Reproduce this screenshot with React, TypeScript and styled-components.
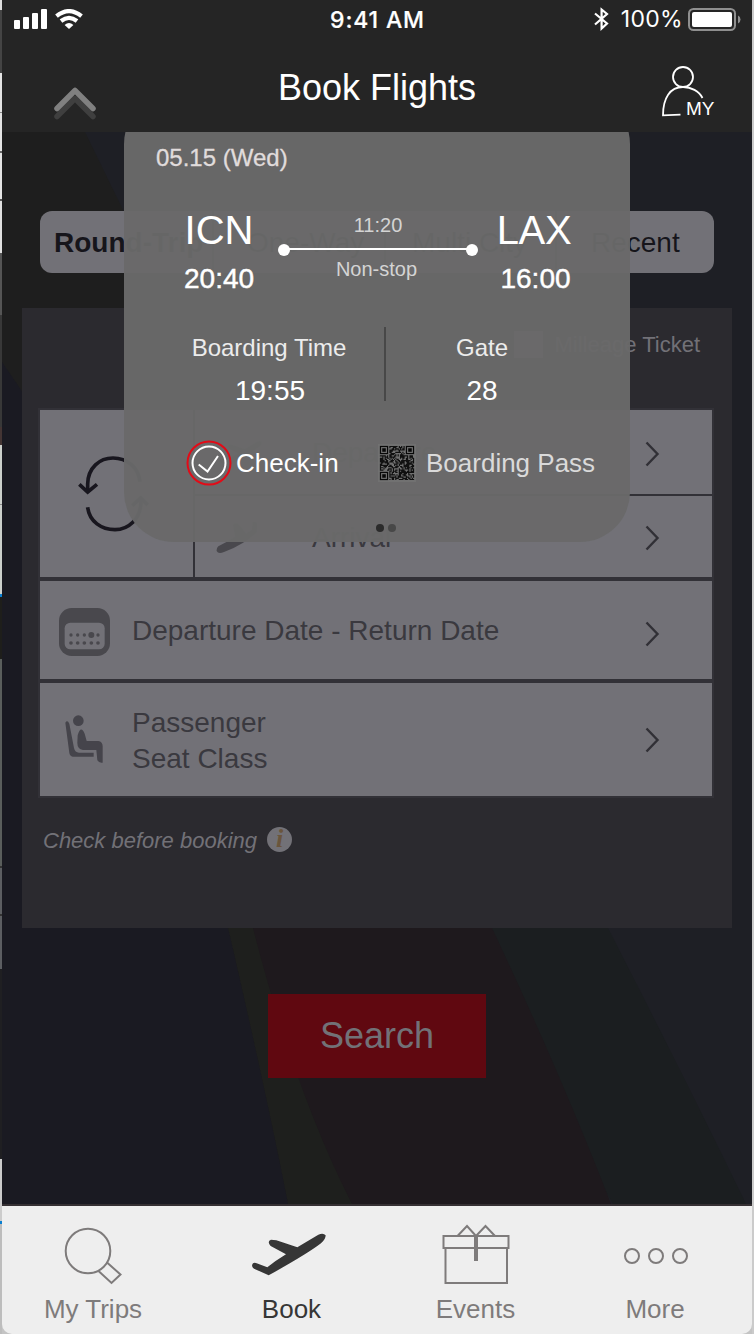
import React from "react";
import styled, { createGlobalStyle } from "styled-components";

const GlobalStyle = createGlobalStyle`
  * { box-sizing: border-box; }
  body { margin: 0; background: #d0d0d0; font-family: "Liberation Sans", Arial, sans-serif; }
  svg { display: block; flex: none; }
`;

const Shell = styled.div`
  display: flex;
  width: 754px;
  height: 1334px;
  overflow: hidden;
`;

const LeftEdge = styled.div`
  width: 2px;
  flex: none;
  background: linear-gradient(
    #ddd 0 10px, #444 10px 73px, #e4e4e4 73px 112px, #888 112px 113px, #e4e4e4 113px 151px,
    #666 151px 153px, #e4e4e4 153px 199px, #555 199px 201px, #e0e0e0 201px 253px, #555 253px 315px,
    #383838 315px 427px, #443534 427px 445px, #ccd0cc 445px 504px, #888 504px 505px, #ccd0cc 505px 594px,
    #0a7fd0 594px 597px, #1e1e1b 597px 659px, #5a5e5c 659px 866px, #333 866px 868px, #5c5e62 868px 914px,
    #333 914px 916px, #5c5e62 916px 969px, #1f1f22 969px 1159px, #ccc 1159px 1221px, #0a7fd0 1221px 1224px,
    #bdbdbd 1224px 1334px
  );
`;

const RightEdge = styled.div`
  width: 2px;
  flex: none;
  background: #cbcbcb;
`;

const Phone = styled.div`
  width: 750px;
  height: 1334px;
  display: flex;
  flex-direction: column;
  background: #c4c4c4;
`;

const Header = styled.header`
  height: 132px;
  flex: none;
  background: #252525;
  color: #fff;
`;

const StatusBar = styled.div`
  height: 38px;
  display: grid;
  grid-template-columns: 1fr auto 1fr;
  align-items: center;
  padding: 0 11px 0 12px;
`;

const StatusGroup = styled.div<{ $end?: boolean }>`
  display: flex;
  align-items: center;
  justify-content: ${(p) => (p.$end ? "flex-end" : "flex-start")};
  gap: 7px;
  padding-bottom: ${(p) => (p.$end ? 1 : 1)}px;
`;

const Clock = styled.span`
  font: 500 23px/38px Inter, sans-serif;
  letter-spacing: 0.85px;
  -webkit-text-stroke: 0.2px #fff;
`;

const Percent = styled.span`
  font: 400 23px/38px Inter, sans-serif;
  letter-spacing: 0.3px;
  margin: 0 -2px 0 5px;
`;

const TitleBar = styled.div`
  height: 94px;
  display: grid;
  grid-template-columns: 1fr auto 1fr;
  padding: 26px 36px 0 51px;
`;

const Title = styled.h1`
  margin: 0 15px 0 0;
  font-size: 36px;
  font-weight: 400;
  line-height: 48px;
`;

const CollapseSlot = styled.div`
  padding-top: 22px;
`;

const ProfileSlot = styled.div`
  display: flex;
  justify-content: flex-end;
`;

const Body = styled.main`
  position: relative;
  height: 1074px;
  flex: none;
  overflow: hidden;
  background: #1e1e1e;
  border-bottom: 2px solid #353033;
`;

const Backdrop = styled.svg`
  position: absolute;
  left: 0;
  top: 0;
`;

const Booking = styled.section`
  position: relative;
  padding: 79px 20px 0;
`;

const TripTabs = styled.div`
  height: 62px;
  margin: 0 18px;
  display: grid;
  grid-template-columns: 172px 172px 171px 159px;
  border-radius: 12px;
  background: #727177;
  overflow: hidden;
`;

const TripTab = styled.div<{ $active?: boolean; $indent: number }>`
  padding-left: ${(p) => p.$indent}px;
  border-left: ${(p) => (p.$active ? "0" : "2px solid #4a494f")};
  font-size: 28px;
  font-weight: ${(p) => (p.$active ? 700 : 400)};
  line-height: 63px;
  color: #16151b;
  white-space: nowrap;
`;

const Panel = styled.div`
  height: 620px;
  margin-top: 35px;
  padding: 0 18px 0 16px;
  background: #2b2a2f;
`;

const Mileage = styled.div`
  height: 100px;
  display: flex;
  justify-content: flex-end;
  align-items: center;
  gap: 11px;
  padding: 0 14px 27px 0;
  font-size: 22px;
  color: #727177;
`;

const CheckBox = styled.span`
  width: 29px;
  height: 27px;
  background: #727177;
`;

const Fields = styled.div`
  width: 676px;
  height: 390px;
  border: 2px solid #323137;
  background: #323137;
  display: grid;
  grid-template-rows: 167px 98px 113px;
  row-gap: 4px;
`;

const RouteFields = styled.div`
  display: grid;
  grid-template-columns: 153px 517px;
  grid-template-rows: 84px 81px;
  gap: 2px;
`;

const SwapCell = styled.div`
  grid-row: span 2;
  display: flex;
  align-items: center;
  padding-left: 38px;
  background: #727177;
`;

const Field = styled.div<{ $iconWidth: number; $nudge?: number }>`
  display: grid;
  grid-template-columns: ${(p) => p.$iconWidth}px 1fr 68.5px;
  align-items: center;
  padding-top: 2px;
  background: #727177;
  color: #3a393f;
  font-size: 28px;
  line-height: 36px;

  & > svg:last-child { margin-top: ${(p) => p.$nudge ?? -2}px; }
`;

const FieldIcon = styled.div<{ $left: number; $top?: number }>`
  padding: 0 0 0 ${(p) => p.$left}px;
  margin-top: ${(p) => p.$top ?? 0}px;
`;

const Notice = styled.div`
  height: 86px;
  display: flex;
  align-items: center;
  gap: 10px;
  padding-left: 5px;
  font-size: 22px;
  font-style: italic;
  color: #727177;
`;

const InfoBadge = styled.span`
  width: 25px;
  height: 25px;
  border-radius: 50%;
  background: #727177;
  color: #6a553c;
  font: italic 700 26px/24px "Liberation Serif", serif;
  text-align: center;
  margin-top: -4px;
`;

const SearchButton = styled.button`
  display: block;
  width: 218px;
  height: 84px;
  margin: 66px auto 0;
  border: 0;
  padding: 0;
  background: #600810;
  color: #727177;
  font: 400 36px/84px "Liberation Sans", Arial, sans-serif;
`;

const FlightCard = styled.aside`
  position: absolute;
  left: 122px;
  top: -38px;
  width: 506px;
  height: 448px;
  padding: 50px 32px 0;
  border-radius: 50px;
  background: rgba(105, 105, 105, 0.967);
  color: #fff;
`;

const FlightDate = styled.div`
  font-size: 24px;
  line-height: 28px;
  color: #e0dcdc;
  -webkit-text-stroke: 0.3px #e0dcdc;
`;

const Journey = styled.div`
  display: grid;
  grid-template-columns: 70px 200px 76px;
  column-gap: 24px;
  margin: 34px 0 0 28px;
`;

const Airport = styled.div<{ $shift?: number }>`
  text-align: center;
  margin-left: ${(p) => p.$shift ?? 0}px;
`;

const AirportCode = styled.div<{ $tight?: boolean }>`
  font-size: 40px;
  line-height: 48px;
  letter-spacing: ${(p) => (p.$tight ? "-0.3px" : "0")};
`;

const AirportTime = styled.div<{ $indent?: number }>`
  padding-left: ${(p) => p.$indent ?? 0}px;
  font-size: 28px;
  line-height: 50px;
  -webkit-text-stroke: 0.45px #fff;
`;

const Leg = styled.div`
  padding-top: 9px;
  display: flex;
  flex-direction: column;
  align-items: center;
  font-size: 20px;
  line-height: 20px;
  color: #d4d4d4;
`;

const LegKind = styled.span`
  margin-left: -3px;
`;

const Track = styled.div`
  width: 200px;
  height: 12px;
  margin: 9px 0 3px;
  display: flex;
  align-items: center;

  &::before, &::after {
    content: "";
    width: 12px;
    height: 12px;
    border-radius: 50%;
    background: #fff;
  }
`;

const TrackLine = styled.span`
  flex: 1;
  height: 2px;
  margin: -2px -1px 0;
  background: #fff;
`;

const Details = styled.div`
  display: grid;
  grid-template-columns: 228px 2px 192px;
  margin-top: 23px;
`;

const Detail = styled.div`
  padding-top: 7px;
  display: flex;
  flex-direction: column;
  gap: 15px;
  align-items: center;
  font-size: 24px;
  line-height: 28px;
`;

const DetailLabel = styled.span<{ $offset?: number }>`
  margin-left: ${(p) => p.$offset ?? 0}px;
  color: #ececec;
`;

const DetailValue = styled.span`
  font-size: 28px;
`;

const Rule = styled.span`
  height: 74px;
  background: #484848;
`;

const Actions = styled.div`
  display: flex;
  align-items: center;
  height: 46px;
  margin: 35px 0 0 30px;
  font-size: 26px;
  white-space: nowrap;
`;

const ActionText = styled.span<{ $muted?: boolean }>`
  margin-left: ${(p) => (p.$muted ? 10 : 4)}px;
  width: ${(p) => (p.$muted ? "auto" : "142px")};
  color: ${(p) => (p.$muted ? "#dadada" : "#fff")};
`;

const Pager = styled.div`
  display: flex;
  gap: 4px;
  margin: 38px 0 0 220px;
`;

const PagerDot = styled.span<{ $on?: boolean }>`
  width: 8px;
  height: 8px;
  border-radius: 50%;
  background: ${(p) => (p.$on ? "#2b2b2b" : "#484848")};
`;

const TabBar = styled.nav`
  height: 128px;
  display: grid;
  grid-template-columns: 182px 215px 153px 206px;
  background: #eee;
  border-radius: 0 0 10px 10px;
  overflow: hidden;
`;

const TabItem = styled.div<{ $active?: boolean }>`
  display: flex;
  flex-direction: column;
  align-items: center;
  font-size: 26px;
  line-height: 32px;
  color: ${(p) => (p.$active ? "#363636" : "#7e7b7b")};
`;

const TabIcon = styled.div<{ $raise?: number; $shift?: number }>`
  height: 87px;
  display: flex;
  align-items: center;
  padding-top: ${(p) => 13 - (p.$raise ?? 0) * 2}px;
  margin-left: ${(p) => (p.$shift ?? 0) * 2}px;
`;

const takeoffShape =
  "M806 226 L762 206 Q752 199 759 190 Q764 187 770 190 L802 202 Q828 181 858 163 L812 138 Q800 124 813 119 L829 121 L892 142 L955 104 Q970 97 977 106 Q977 118 963 130 Q920 163 806 226 Z";

const PlaneIcon = ({ width, color }: { width: number; color: string }) => (
  <svg width={width} height={(width * 144) / 234} viewBox="750 90 234 144">
    <path d={takeoffShape} fill={color} />
  </svg>
);

const LandingIcon = () => (
  <svg width="44" height="34" viewBox="648 656 132 102">
    <path
      d="M655 735 Q680 722 706 706 L699 670 Q708 660 718 672 L738 697 L756 686 L758 663 Q770 659 771 668 L770 692 Q735 728 672 752 Q655 760 650 749 Q649 740 655 735 Z"
      fill="#49484d"
    />
  </svg>
);

const ChevronRight = () => (
  <svg width="16" height="28" viewBox="0 0 16 28">
    <path d="M2.5 2.5 L13.5 14 L2.5 25.5" fill="none" stroke="#313036" strokeWidth="2.4" />
  </svg>
);

const SwapIcon = () => (
  <svg width="72" height="78" viewBox="234 465 216 234" fill="none" stroke="#18161e" strokeWidth="11">
    <path d="M263 574 V552 C264 503 299 474 339 474 C381 474 415 502 420 545" />
    <path d="M238 553 L263 576 L291 553" />
    <path d="M263 622 C268 665 305 689 345 689 C382 689 425 660 423 598" />
    <path d="M397 617 L422 594 L443 615" />
  </svg>
);

const CalendarIcon = () => (
  <svg width="51" height="48" viewBox="177 114 153 144">
    <rect x="177" y="114" width="153" height="144" rx="38" fill="#49484d" />
    <rect x="194" y="158" width="120" height="80" rx="17" fill="#727177" />
    <g fill="#49484d">
      {[213, 233, 253, 274, 294].map((x) => (
        <React.Fragment key={x}>
          <circle cx={x} cy="195" r={x === 274 ? 9 : 5} />
          <circle cx={x} cy="219" r="5.5" />
        </React.Fragment>
      ))}
    </g>
  </svg>
);

const SeatIcon = () => (
  <svg width="38" height="48" viewBox="196 436 114 144" fill="#45444b">
    <circle cx="236" cy="453" r="16" />
    <path d="M197 459 Q203 449 209 462 L223 535 Q226 549 238 549 H282 V561 H219 Q211 560 209 550 Z" />
    <path d="M234 497 Q243 465 255 492 L261 514 H296 Q309 516 309 530 V579 Q298 581 293 572 L290 541 H250 Q233 538 233 520 Z" />
  </svg>
);

const SIZE = 29;
const inFinder = (x: number, y: number) =>
  (x < 8 && y < 8) || (x > SIZE - 9 && y < 8) || (x < 8 && y > SIZE - 9);
const modules: string[] = [];
let seed = 77;
for (let y = 0; y < SIZE; y++) {
  for (let x = 0; x < SIZE; x++) {
    seed = (seed * 1103515245 + 12345) % 2147483648;
    if (!inFinder(x, y) && seed / 2147483648 > 0.36) modules.push(`M${x} ${y}h1v1h-1z`);
  }
}

const QrCode = () => (
  <svg width="38" height="38" viewBox="-1.6 -1.6 32.2 32.2">
    <rect x="-1.6" y="-1.6" width="32.2" height="32.2" fill="#717171" />
    <path d={modules.join("")} fill="#101010" />
    {[[0, 0], [22, 0], [0, 22]].map(([x, y]) => (
      <g key={`${x}-${y}`}>
        <rect x={x + 0.5} y={y + 0.5} width="6" height="6" fill="none" stroke="#080808" />
        <rect x={x + 2} y={y + 2} width="3" height="3" fill="#080808" />
      </g>
    ))}
  </svg>
);

const CheckIcon = () => (
  <svg width="46" height="46" viewBox="0 0 46 46" fill="none">
    <circle cx="23" cy="23" r="21.5" stroke="#e30b17" strokeWidth="2" />
    <circle cx="23" cy="23" r="16.5" stroke="#fff" strokeWidth="2" />
    <path d="M12.7 24.5 L21.5 31.5 L32 16" stroke="#fff" strokeWidth="2" />
  </svg>
);

const SignalIcon = () => (
  <svg width="34" height="20" viewBox="0 0 34 20" fill="#fff">
    <rect x="0" y="11" width="6" height="9" rx="1" />
    <rect x="9" y="8" width="6" height="12" rx="1" />
    <rect x="18" y="4" width="6" height="16" rx="1" />
    <rect x="27" y="0" width="6" height="20" rx="1" />
  </svg>
);

const WifiIcon = () => (
  <svg width="28" height="20" viewBox="0 0 28 20">
    <g fill="none" stroke="#fff" strokeWidth="4.2">
      <path d="M1.5 7.2 Q14 -3 26.5 7.2" />
      <path d="M6 12 Q14 5.8 22 12" />
    </g>
    <path d="M9.6 16 Q14 12.2 18.4 16 L14 20 Z" fill="#fff" />
  </svg>
);

const BluetoothIcon = () => (
  <svg width="15" height="24" viewBox="0 0 15 24">
    <path d="M1 6.5 L13 16.5 L7.6 21.5 V2.5 L13 7 L1 17.5" fill="none" stroke="#fff" strokeWidth="2.2" />
  </svg>
);

const BatteryIcon = () => (
  <svg width="53" height="23" viewBox="0 0 53 23">
    <rect x="1" y="1" width="46" height="21" rx="4.5" fill="none" stroke="#8f8f8f" strokeWidth="2" />
    <rect x="4" y="4" width="40" height="15" rx="2" fill="#fff" />
    <path d="M50 7.5 Q52.5 8.5 52.5 11.5 Q52.5 14.5 50 15.5 Z" fill="#8f8f8f" />
  </svg>
);

const CollapseIcon = () => (
  <svg width="44" height="36" viewBox="0 0 44 36" fill="none" strokeWidth="5.5" strokeLinecap="round" strokeLinejoin="round">
    <path d="M4 30.5 L22 12.5 L40 30.5" stroke="#3f3f3f" />
    <path d="M4 22.5 L22 4.5 L40 22.5" stroke="#808080" />
  </svg>
);

const ProfileIcon = () => (
  <svg width="56" height="54" viewBox="0 0 56 54">
    <g fill="none" stroke="#fff" strokeWidth="1.8">
      <circle cx="23" cy="13" r="10" />
      <path d="M42.5 34 C39 27 31 23 23 23 C10 23 3 34 3 51.3 L20.5 50.6" />
    </g>
    <text x="26" y="51" fill="#fff" fontSize="19" fontFamily="Liberation Sans, Arial, sans-serif">MY</text>
  </svg>
);

const MagnifierIcon = () => (
  <svg width="58" height="58" viewBox="0 0 58 58" fill="none" stroke="#7e7b7b" strokeWidth="2">
    <circle cx="24" cy="24" r="22.3" />
    <path d="M34.5 44 L47.5 56 L56.5 47.5 L43 35.5" />
  </svg>
);

const GiftIcon = () => (
  <svg width="68" height="60" viewBox="0 0 68 60" fill="none" stroke="#7e7b7b" strokeWidth="2">
    <rect x="1.5" y="12" width="65" height="12" />
    <path d="M3.5 24 V59 H65 V24" />
    <path d="M15.5 12 L25 2 L34 12 L43.5 2 L53 12" />
    <path d="M34 12 V37" strokeWidth="4" />
  </svg>
);

const MoreIcon = () => (
  <svg width="66" height="18" viewBox="0 0 66 18" fill="none" stroke="#7e7b7b" strokeWidth="2">
    <circle cx="9" cy="9" r="7" />
    <circle cx="33" cy="9" r="7" />
    <circle cx="57" cy="9" r="7" />
  </svg>
);

export default function App() {
  return (
    <Shell>
      <GlobalStyle />
      <LeftEdge />
      <Phone>
        <Header>
          <StatusBar>
            <StatusGroup><SignalIcon /><WifiIcon /></StatusGroup>
            <Clock>9:41 AM</Clock>
            <StatusGroup $end>
              <BluetoothIcon />
              <Percent>100%</Percent>
              <BatteryIcon />
            </StatusGroup>
          </StatusBar>
          <TitleBar>
            <CollapseSlot><CollapseIcon /></CollapseSlot>
            <Title>Book Flights</Title>
            <ProfileSlot><ProfileIcon /></ProfileSlot>
          </TitleBar>
        </Header>
        <Body>
          <Backdrop width="750" height="1072" viewBox="0 0 750 1072">
            <path d="M83 0 H750 V1072 H380 L122 80 Z" fill="#1e1f25" />
            <path d="M470 760 L490 796 Q540 950 611 1072 H744 Q690 960 606 796 V760 Z" fill="#1b1e20" />
            <path d="M240 760 L251 796 Q285 960 350 1072 H609 Q560 945 490 796 V760 Z" fill="#1e191d" />
            <path d="M220 760 L226 796 Q264 960 286 1072 H350 Q293 960 251 796 V760 Z" fill="#1e1f1d" />
            <path d="M0 230 Q170 470 226 796 Q264 960 286 1072 H0 Z" fill="#1a1a22" />
          </Backdrop>
          <Booking>
            <TripTabs>
              <TripTab $active $indent={14}>Round-Trip</TripTab>
              <TripTab $indent={33}>One-Way</TripTab>
              <TripTab $indent={26}>Multi City</TripTab>
              <TripTab $indent={34}>Recent</TripTab>
            </TripTabs>
            <Panel>
              <Mileage><CheckBox />Milleage Ticket</Mileage>
              <Fields>
                <RouteFields>
                  <SwapCell><SwapIcon /></SwapCell>
                  <Field $iconWidth={117} $nudge={1}>
                    <FieldIcon $left={22}><PlaneIcon width={46} color="#49484d" /></FieldIcon>
                    Departure
                    <ChevronRight />
                  </Field>
                  <Field $iconWidth={117} $nudge={0}>
                    <FieldIcon $left={21} $top={-2}><LandingIcon /></FieldIcon>
                    <span>Arrival</span>
                    <ChevronRight />
                  </Field>
                </RouteFields>
                <Field $iconWidth={92} $nudge={5}>
                  <FieldIcon $left={19} $top={2}><CalendarIcon /></FieldIcon>
                  Departure Date - Return Date
                  <ChevronRight />
                </Field>
                <Field $iconWidth={92}>
                  <FieldIcon $left={25} $top={-3}><SeatIcon /></FieldIcon>
                  <span>Passenger<br />Seat Class</span>
                  <ChevronRight />
                </Field>
              </Fields>
              <Notice>Check before booking <InfoBadge>i</InfoBadge></Notice>
            </Panel>
            <SearchButton>Search</SearchButton>
          </Booking>
          <FlightCard>
            <FlightDate>05.15 (Wed)</FlightDate>
            <Journey>
              <Airport>
                <AirportCode>ICN</AirportCode>
                <AirportTime>20:40</AirportTime>
              </Airport>
              <Leg>
                <span>11:20</span>
                <Track><TrackLine /></Track>
                <LegKind>Non-stop</LegKind>
              </Leg>
              <Airport $shift={-12}>
                <AirportCode $tight>LAX</AirportCode>
                <AirportTime $indent={3}>16:00</AirportTime>
              </Airport>
            </Journey>
            <Details>
              <Detail>
                <DetailLabel $offset={-2}>Boarding Time</DetailLabel>
                <DetailValue>19:55</DetailValue>
              </Detail>
              <Rule />
              <Detail>
                <DetailLabel>Gate</DetailLabel>
                <DetailValue>28</DetailValue>
              </Detail>
            </Details>
            <Actions>
              <CheckIcon />
              <ActionText>Check-in</ActionText>
              <QrCode />
              <ActionText $muted>Boarding Pass</ActionText>
            </Actions>
            <Pager><PagerDot $on /><PagerDot /></Pager>
          </FlightCard>
        </Body>
        <TabBar>
          <TabItem><TabIcon $raise={0.5}><MagnifierIcon /></TabIcon>My Trips</TabItem>
          <TabItem $active><TabIcon $raise={2} $shift={-2.5}><PlaneIcon width={78} color="#363636" /></TabIcon>Book</TabItem>
          <TabItem><TabIcon $raise={2} $shift={0.5}><GiftIcon /></TabIcon>Events</TabItem>
          <TabItem><TabIcon $shift={1}><MoreIcon /></TabIcon>More</TabItem>
        </TabBar>
      </Phone>
      <RightEdge />
    </Shell>
  );
}
